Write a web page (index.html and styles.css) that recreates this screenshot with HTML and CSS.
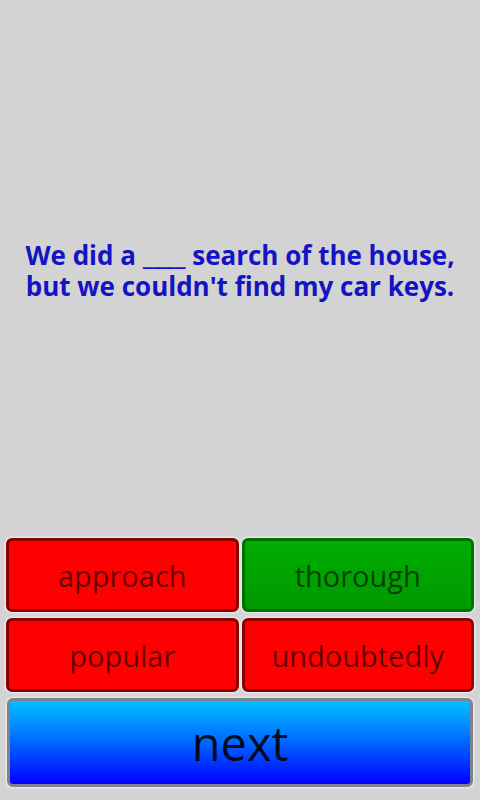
FILE: index.html
```html
<!DOCTYPE html>
<html>
<head>
<meta charset="utf-8">
<link rel="stylesheet" href="styles.css">
</head>
<body>
<div class="screen">
  <div class="question">
    <p class="qtext">We did a ____ search of the house,<br>but we couldn't find my car keys.</p>
  </div>
  <div class="answers">
    <div class="btn wrong">approach</div>
    <div class="btn right">thorough</div>
    <div class="btn wrong">popular</div>
    <div class="btn wrong">undoubtedly</div>
  </div>
  <div class="next">next</div>
</div>
</body>
</html>
```
FILE: styles.css
```css
html, body {
  margin: 0;
  padding: 0;
  background: #d3d3d3;
}
.screen {
  width: 480px;
  height: 800px;
  display: flex;
  flex-direction: column;
  font-family: "Open Sans", "Noto Sans", sans-serif;
}
.question {
  flex: 1;
  display: flex;
  align-items: center;
  justify-content: center;
  padding-top: 4px;
}
.qtext {
  margin: 0;
  text-align: center;
  color: #1414c4;
  font-weight: bold;
  font-size: 26px;
  line-height: 31px;
}
.answers {
  display: grid;
  grid-template-columns: 1fr 1fr;
  column-gap: 3px;
  row-gap: 6px;
  padding: 0 6px;
}
.btn {
  height: 74px;
  box-sizing: border-box;
  border-radius: 6px;
  display: flex;
  align-items: center;
  justify-content: center;
  font-size: 29px;
  color: rgba(0, 0, 0, 0.62);
  box-shadow: 0 0 2px 1px rgba(255, 255, 255, 0.7);
}
.wrong {
  background: #ff0000;
  border: 3px solid #880000;
}
.right {
  background: linear-gradient(#00ad00, #009800);
  border: 3px solid #007000;
}
.next {
  margin: 6px 7px 13px;
  height: 89px;
  box-sizing: border-box;
  border: 3px solid #7c8290;
  border-radius: 6px;
  background: linear-gradient(#00c0ff, #0070ff 45%, #0000ff);
  display: flex;
  align-items: center;
  justify-content: center;
  font-size: 47px;
  color: rgba(0, 0, 0, 0.88);
  box-shadow: 0 0 2px 1px rgba(255, 255, 255, 0.7);
}
```
